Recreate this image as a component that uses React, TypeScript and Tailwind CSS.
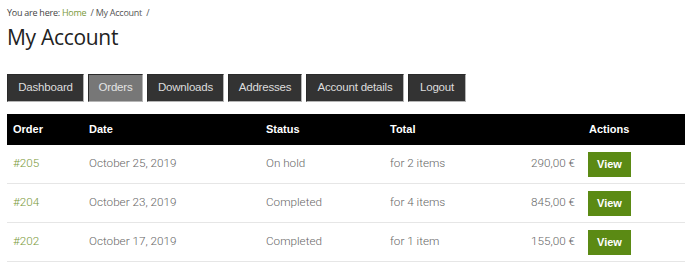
const tabs = [
  { label: 'Dashboard', w: 'w-[77px]' },
  { label: 'Orders', w: 'w-[55px]' },
  { label: 'Downloads', w: 'w-[77px]' },
  { label: 'Addresses', w: 'w-[74px]' },
  { label: 'Account details', w: 'w-[98px]' },
  { label: 'Logout', w: 'w-[58px]' },
];

const orders = [
  { id: '#205', date: 'October 25, 2019', status: 'On hold', items: 'for 2 items', total: '290,00 €' },
  { id: '#204', date: 'October 23, 2019', status: 'Completed', items: 'for 4 items', total: '845,00 €' },
  { id: '#202', date: 'October 17, 2019', status: 'Completed', items: 'for 1 item', total: '155,00 €' },
];

const cols = 'grid grid-cols-[76px_177px_124px_198px_1fr] items-center';

export default function App() {
  return (
    <div className="w-[690px] h-[272px] bg-white overflow-hidden pl-[7px] pr-[5px]">
      {/* Breadcrumb */}
      <div className="pt-[7px] text-[9px] leading-[11px] text-[#444] font-['Open_Sans',sans-serif] tracking-[-0.25px]">
        You are here: <span className="text-[#7a9a3a]">Home</span>
        <span className="text-[#555]">&nbsp; / My Account &nbsp;/</span>
      </div>

      <h1 className="mt-[6px] text-[21px] leading-[26px] text-[#222] font-['Open_Sans',sans-serif] tracking-[-0.3px]">
        My Account
      </h1>

      {/* Tabs */}
      <div className="mt-[24px] flex gap-[4px] font-['Liberation_Sans',Arial,sans-serif]">
        {tabs.map((t) => (
          <div
            key={t.label}
            className={`${t.w} h-[28px] flex items-center justify-center text-[11.5px] tracking-[-0.2px] border border-[#2a2a2a] border-r-[#b5b5b5] border-b-[#b5b5b5] ${
              t.label === 'Orders' ? 'bg-[#777] text-[#e4e4e4]' : 'bg-[#333] text-[#ddd]'
            }`}
          >
            {t.label}
          </div>
        ))}
      </div>

      {/* Orders table */}
      <div className="mt-[12px] font-['Roboto',sans-serif]">
        <div className={`${cols} h-[31px] bg-black text-white font-bold text-[11px] font-['Liberation_Sans',Arial,sans-serif]`}>
          <div className="pl-[6px]">Order</div>
          <div className="pl-[6px]">Date</div>
          <div className="pl-[6px]">Status</div>
          <div className="pl-[6px]">Total</div>
          <div className="pl-[7px]">Actions</div>
        </div>
        {orders.map((o) => (
          <div key={o.id} className={`${cols} h-[39px] border-b border-[#e6e6e6] text-[11.7px] font-light text-[#666]`}>
            <div className="pl-[6px] text-[#7a9a3a]">{o.id}</div>
            <div className="pl-[6px]">{o.date}</div>
            <div className="pl-[6px]">{o.status}</div>
            <div className="pl-[6px] pr-[7px] flex justify-between">
              <span>{o.items}</span>
              <span>{o.total}</span>
            </div>
            <div className="pl-[6px]">
              <div className="w-[43px] h-[25px] bg-[#5b8a14] text-white font-bold text-[11px] flex items-center justify-center font-['Liberation_Sans',Arial,sans-serif]">
                View
              </div>
            </div>
          </div>
        ))}
      </div>
    </div>
  );
}
